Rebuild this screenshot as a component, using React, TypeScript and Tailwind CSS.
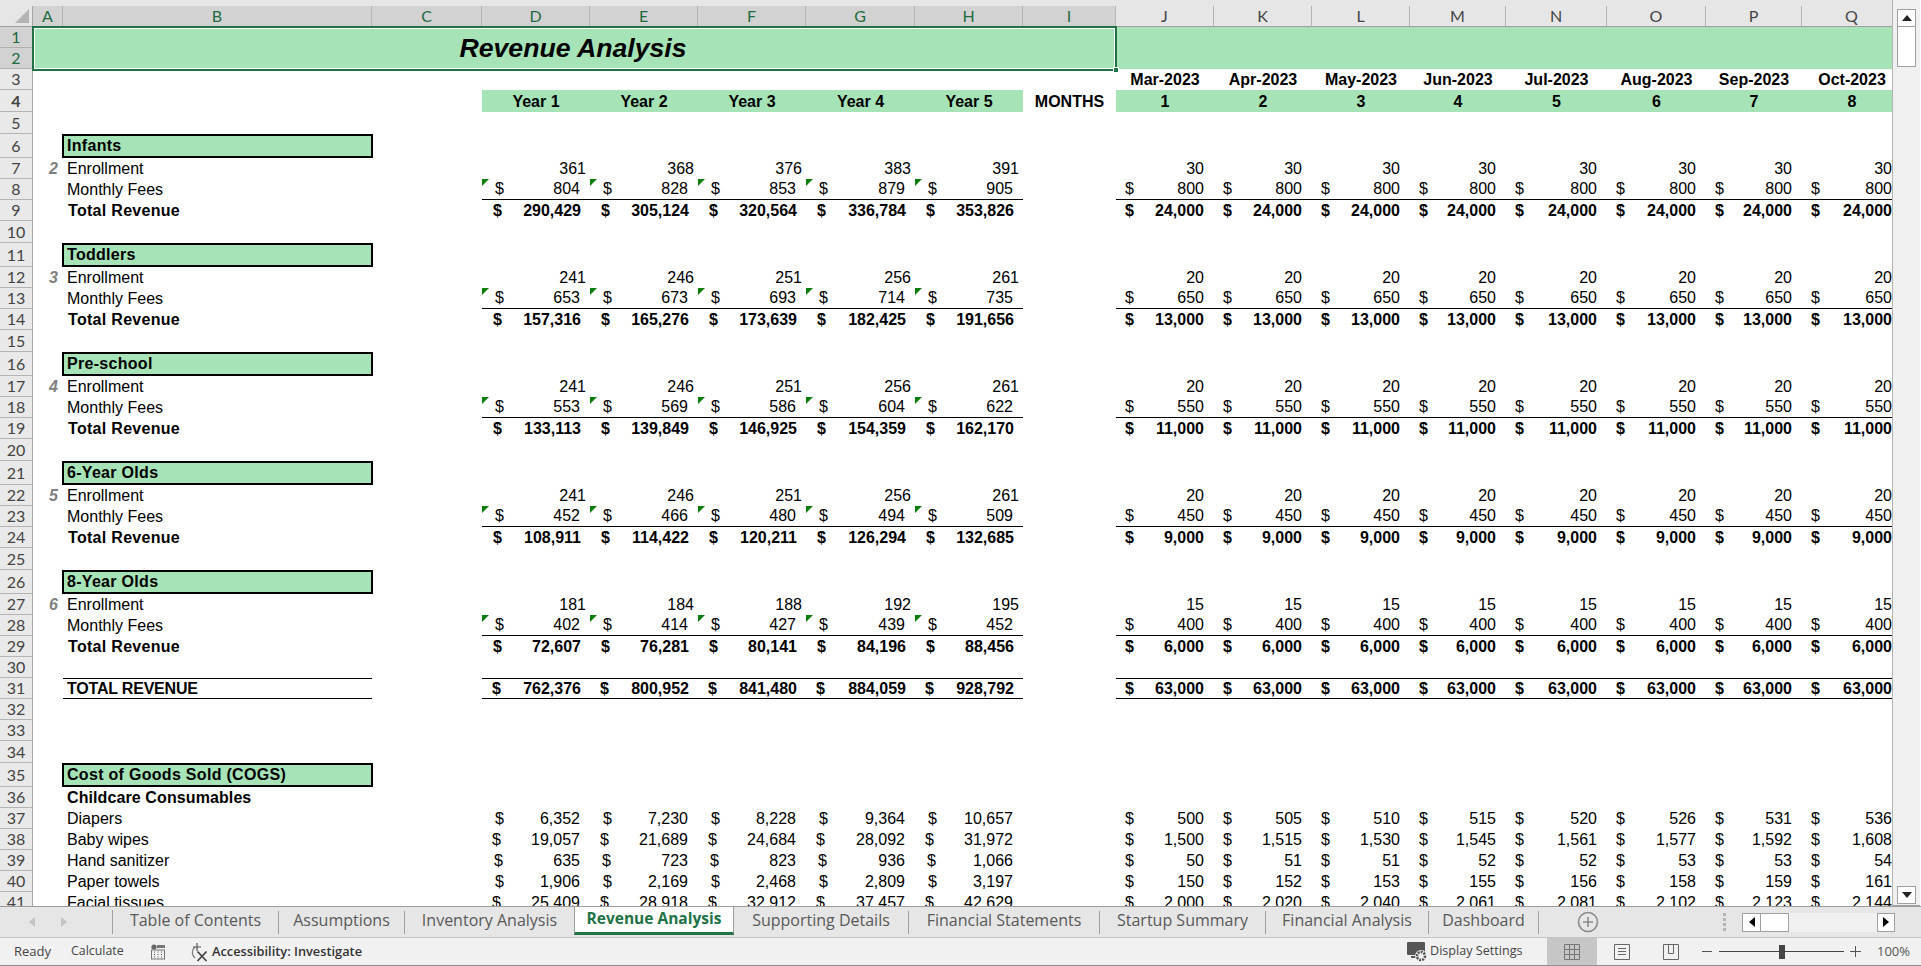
import React from "react";

const GRID =
  "grid w-[1902px] grid-cols-[33px_30px_309px_110px_108px_108px_108px_109px_108px_93px_98px_98px_98px_96px_101px_99px_96px_100px]";

type Border = "none" | "b" | "tb";
const borderClass: Record<Border, string> = {
  none: "",
  b: "border-b border-black",
  tb: "border-y border-black",
};

function RowHead({ n }: { n: number }) {
  return (
    <div className="flex items-center justify-center border-r border-b border-r-[#a6a6a6] border-b-[#b4b4b4] bg-[#e9e9e9] font-['Lato',sans-serif] text-[16px] text-[#444444]">
      {n}
    </div>
  );
}

function Money({
  v,
  pl,
  pr,
  bold,
  border = "none",
  tri,
  dollar = true,
}: {
  v: string;
  pl: string;
  pr: string;
  bold?: boolean;
  border?: Border;
  tri?: boolean;
  dollar?: boolean;
}) {
  return (
    <div
      className={`relative flex items-center ${dollar ? "justify-between" : "justify-end"} ${pl} ${pr} ${borderClass[border]} ${bold ? "font-bold" : ""}`}
    >
      {tri && (
        <span className="absolute top-0 left-0 h-0 w-0 border-t-[7px] border-r-[7px] border-t-[#0b7d0b] border-r-transparent" />
      )}
      {dollar && <span>$</span>}
      <span>{v}</span>
    </div>
  );
}

function Blank({ n, h }: { n: number; h: string }) {
  return (
    <div className={`${GRID} ${h}`}>
      <RowHead n={n} />
    </div>
  );
}

function DataRow({
  n,
  h,
  num,
  label,
  labelClass = "pl-1",
  years,
  months,
  usdY = "pl-[12px]",
  usdM = "pl-[9px]",
  bold,
  border = "none",
  dollar = true,
  prY = "pr-[10px]",
  tri,
  labelBorder,
}: {
  n: number;
  h: string;
  num?: number;
  label: string;
  labelClass?: string;
  years: string[];
  months: string[];
  usdY?: string;
  usdM?: string;
  bold?: boolean;
  border?: Border;
  dollar?: boolean;
  prY?: string;
  tri?: boolean;
  labelBorder?: boolean;
}) {
  return (
    <div className={`${GRID} ${h}`}>
      <RowHead n={n} />
      <div className="flex items-center justify-end pr-[5px] font-bold text-[#808080] italic">{num}</div>
      <div
        className={`flex items-center whitespace-nowrap ${labelClass} ${labelBorder ? "border-y border-black" : ""}`}
      >
        {label}
      </div>
      <div />
      {years.map((v, i) => (
        <Money key={i} v={v} pl={usdY} pr={prY} bold={bold} border={border} dollar={dollar} tri={tri} />
      ))}
      <div />
      {months.map((v, i) => (
        <Money key={i} v={v} pl={usdM} pr="pr-[10px]" bold={bold} border={border} dollar={dollar} />
      ))}
    </div>
  );
}

function Section({ n, h, label }: { n: number; h: string; label: string }) {
  return (
    <div className={`${GRID} ${h}`}>
      <RowHead n={n} />
      <div />
      <div className="-mx-px flex items-center border-2 border-black bg-[#a6e3b7] pl-[3px] font-bold tracking-[0.3px] whitespace-nowrap">
        {label}
      </div>
    </div>
  );
}

function Block({
  start,
  num,
  title,
  enroll,
  fees,
  total,
  mE,
  mF,
  mT,
  gap,
}: {
  start: number;
  num: number;
  title: string;
  enroll: string[];
  fees: string[];
  total: string[];
  mE: string;
  mF: string;
  mT: string;
  gap: boolean;
}) {
  const eight = (s: string) => Array.from({ length: 8 }, () => s);
  return (
    <>
      <Section n={start} h="h-[24px]" label={title} />
      <DataRow
        n={start + 1}
        h="h-[21px]"
        num={num}
        label="Enrollment"
        years={enroll}
        months={eight(mE)}
        dollar={false}
        prY="pr-[4px]"
      />
      <DataRow
        n={start + 2}
        h="h-[21px]"
        label="Monthly Fees"
        years={fees}
        months={eight(mF)}
        usdY="pl-[13px]"
        border="b"
        tri
      />
      <DataRow
        n={start + 3}
        h="h-[21px]"
        label="Total Revenue"
        labelClass="pl-[5px] font-bold tracking-[0.3px]"
        years={total}
        months={eight(mT)}
        usdY="pl-[11px]"
        prY="pr-[9px]"
        bold
      />
      {gap ? <Blank n={start + 4} h="h-[22px]" /> : null}
    </>
  );
}

function ColHead({ l, sel }: { l: string; sel?: boolean }) {
  return (
    <div
      className={`flex items-center justify-center border-r border-b border-r-[#b4b4b4] border-b-[#a0a0a0] font-['Lato',sans-serif] text-[16px] ${sel ? "bg-[#d2d2d2] text-[#1f6b40]" : "bg-[#e6e6e6] text-[#444444]"}`}
    >
      {l}
    </div>
  );
}

function SmallTri({ dir, cls }: { dir: "l" | "r"; cls: string }) {
  return (
    <svg width="8" height="12" viewBox="0 0 8 12" className={cls}>
      <polygon points={dir === "l" ? "7,1 1,6 7,11" : "1,1 7,6 1,11"} fill="currentColor" />
    </svg>
  );
}

const TABS: { t: string; w: string; active?: boolean }[] = [
  { t: "Table of Contents", w: "w-[166px]" },
  { t: "Assumptions", w: "w-[126px]" },
  { t: "Inventory Analysis", w: "w-[170px]" },
  { t: "Revenue Analysis", w: "w-[160px]", active: true },
  { t: "Supporting Details", w: "w-[175px]" },
  { t: "Financial Statements", w: "w-[191px]" },
  { t: "Startup Summary", w: "w-[166px]" },
  { t: "Financial Analysis", w: "w-[163px]" },
  { t: "Dashboard", w: "w-[110px]" },
];

const MONTHS = ["Mar-2023", "Apr-2023", "May-2023", "Jun-2023", "Jul-2023", "Aug-2023", "Sep-2023", "Oct-2023"];

export default function App() {
  const eight = (s: string) => Array.from({ length: 8 }, () => s);
  return (
    <div className="flex h-[966px] w-[1921px] flex-col overflow-hidden bg-white font-['Liberation_Sans',Arial,sans-serif] text-[16px] leading-none text-black">
      <div className="flex min-h-0 flex-1">
        {/* sheet */}
        <div className="w-[1893px] overflow-hidden border-r border-[#b4b4b4]">
          <div className="h-[6px] bg-[#e6e6e6]" />
          <div className={`${GRID} h-[21px]`}>
            <div className="relative border-r border-b border-r-[#a6a6a6] border-b-[#a0a0a0] bg-[#e6e6e6]">
              <span className="absolute right-[3px] bottom-[3px] h-0 w-0 border-b-[14px] border-l-[14px] border-b-[#b4b4b4] border-l-transparent" />
            </div>
            {"ABCDEFGHI".split("").map((l) => (
              <ColHead key={l} l={l} sel />
            ))}
            {"JKLMNOPQ".split("").map((l) => (
              <ColHead key={l} l={l} />
            ))}
          </div>

          {/* title rows */}
          <div className="flex h-[42px] w-[1902px]">
            <div className="flex w-[33px] flex-col font-['Lato',sans-serif] text-[16px] text-[#1f6b40]">
              <div className="flex flex-1 items-center justify-center border-r border-b border-r-[#a6a6a6] border-b-[#b0b0b0] bg-[#d2d2d2]">
                1
              </div>
              <div className="flex flex-1 items-center justify-center border-r border-b border-r-[#a6a6a6] border-b-[#b0b0b0] bg-[#d2d2d2]">
                2
              </div>
            </div>
            <div className="relative flex w-[1083px] items-center justify-center bg-[#a6e3b7] pt-[1px] pr-[3px] text-[26.67px] font-bold italic">
              Revenue Analysis
              <span className="absolute -inset-x-px -top-px -bottom-[2px] border-2 border-[#217346]" />
              <span className="absolute inset-x-[1px] top-[1px] bottom-0 border border-white" />
              <span className="absolute -right-[3px] -bottom-[4px] h-[6px] w-[6px] border border-white bg-[#217346]" />
            </div>
            <div className="flex-1 bg-[#a6e3b7]" />
          </div>

          {/* row 3 */}
          <div className={`${GRID} h-[21px]`}>
            <RowHead n={3} />
            <div className="col-start-11 col-end-19 grid grid-cols-[98px_98px_98px_96px_101px_99px_96px_100px] font-bold">
              {MONTHS.map((m) => (
                <div key={m} className="flex items-center justify-center pt-[1px] whitespace-nowrap">
                  {m}
                </div>
              ))}
            </div>
          </div>

          {/* row 4 */}
          <div className={`${GRID} h-[22px] font-bold`}>
            <RowHead n={4} />
            <div className="col-start-5 col-end-10 grid grid-cols-[108px_108px_108px_109px_108px] bg-[#a6e3b7]">
              {["Year 1", "Year 2", "Year 3", "Year 4", "Year 5"].map((y) => (
                <div key={y} className="flex items-center justify-center pt-[1px]">
                  {y}
                </div>
              ))}
            </div>
            <div className="flex items-center justify-center pt-[1px]">MONTHS</div>
            <div className="col-start-11 col-end-19 grid grid-cols-[98px_98px_98px_96px_101px_99px_96px_100px] bg-[#a6e3b7]">
              {[1, 2, 3, 4, 5, 6, 7, 8].map((m) => (
                <div key={m} className="flex items-center justify-center pt-[1px]">
                  {m}
                </div>
              ))}
            </div>
          </div>
          <Blank n={5} h="h-[22px]" />

          <Block
            start={6}
            num={2}
            title="Infants"
            enroll={["361", "368", "376", "383", "391"]}
            fees={["804", "828", "853", "879", "905"]}
            total={["290,429", "305,124", "320,564", "336,784", "353,826"]}
            mE="30"
            mF="800"
            mT="24,000"
            gap
          />
          <Block
            start={11}
            num={3}
            title="Toddlers"
            enroll={["241", "246", "251", "256", "261"]}
            fees={["653", "673", "693", "714", "735"]}
            total={["157,316", "165,276", "173,639", "182,425", "191,656"]}
            mE="20"
            mF="650"
            mT="13,000"
            gap
          />
          <Block
            start={16}
            num={4}
            title="Pre-school"
            enroll={["241", "246", "251", "256", "261"]}
            fees={["553", "569", "586", "604", "622"]}
            total={["133,113", "139,849", "146,925", "154,359", "162,170"]}
            mE="20"
            mF="550"
            mT="11,000"
            gap
          />
          <Block
            start={21}
            num={5}
            title="6-Year Olds"
            enroll={["241", "246", "251", "256", "261"]}
            fees={["452", "466", "480", "494", "509"]}
            total={["108,911", "114,422", "120,211", "126,294", "132,685"]}
            mE="20"
            mF="450"
            mT="9,000"
            gap
          />
          <Block
            start={26}
            num={6}
            title="8-Year Olds"
            enroll={["181", "184", "188", "192", "195"]}
            fees={["402", "414", "427", "439", "452"]}
            total={["72,607", "76,281", "80,141", "84,196", "88,456"]}
            mE="15"
            mF="400"
            mT="6,000"
            gap={false}
          />
          <Blank n={30} h="h-[21px]" />
          <DataRow
            n={31}
            h="h-[21px]"
            label="TOTAL REVENUE"
            labelBorder
            years={["762,376", "800,952", "841,480", "884,059", "928,792"]}
            months={eight("63,000")}
            usdY="pl-[10px]"
            prY="pr-[9px]"
            bold
            border="tb"
            labelClass="pl-1 font-bold -tracking-[0.2px]"
          />
          <Blank n={32} h="h-[21px]" />
          <Blank n={33} h="h-[21px]" />
          <Blank n={34} h="h-[22px]" />
          <Section n={35} h="h-[24px]" label="Cost of Goods Sold (COGS)" />
          <div className={`${GRID} h-[21px]`}>
            <RowHead n={36} />
            <div />
            <div className="flex items-center pl-1 font-bold tracking-[0.1px] whitespace-nowrap">Childcare Consumables</div>
          </div>
          <DataRow
            n={37}
            h="h-[21px]"
            label="Diapers"
            usdY="pl-[13px]"
            years={["6,352", "7,230", "8,228", "9,364", "10,657"]}
            months={["500", "505", "510", "515", "520", "526", "531", "536"]}
          />
          <DataRow
            n={38}
            h="h-[21px]"
            label="Baby wipes"
            usdY="pl-[10px]"
            years={["19,057", "21,689", "24,684", "28,092", "31,972"]}
            months={["1,500", "1,515", "1,530", "1,545", "1,561", "1,577", "1,592", "1,608"]}
          />
          <DataRow
            n={39}
            h="h-[21px]"
            label="Hand sanitizer"
            usdY="pl-[12px]"
            years={["635", "723", "823", "936", "1,066"]}
            months={["50", "51", "51", "52", "52", "53", "53", "54"]}
          />
          <DataRow
            n={40}
            h="h-[21px]"
            label="Paper towels"
            usdY="pl-[13px]"
            years={["1,906", "2,169", "2,468", "2,809", "3,197"]}
            months={["150", "152", "153", "155", "156", "158", "159", "161"]}
          />
          <DataRow
            n={41}
            h="h-[21px]"
            label="Facial tissues"
            usdY="pl-[10px]"
            years={["25,409", "28,918", "32,912", "37,457", "42,629"]}
            months={["2,000", "2,020", "2,040", "2,061", "2,081", "2,102", "2,123", "2,144"]}
          />
        </div>

        {/* vertical scrollbar */}
        <div className="flex w-[27px] flex-col items-center justify-between border-b border-[#a0a0a0] bg-[#f0f0f0] pt-[9px] pb-[1px]">
          <div className="flex w-[19px] flex-col">
            <div className="flex h-[18px] items-center justify-center border border-[#a0a0a0] bg-white">
              <svg width="10" height="6" viewBox="0 0 10 6">
                <polygon points="5,0 10,6 0,6" fill="#222" />
              </svg>
            </div>
            <div className="h-[40px] border border-t-0 border-[#a0a0a0] bg-white" />
          </div>
          <div className="flex h-[18px] w-[19px] items-center justify-center border border-[#a0a0a0] bg-white">
            <svg width="10" height="6" viewBox="0 0 10 6">
              <polygon points="0,0 10,0 5,6" fill="#222" />
            </svg>
          </div>
        </div>
      </div>

      {/* tab bar */}
      <div className="flex h-[32px] border-t border-b border-t-[#9c9c9c] border-b-[#c6c6c6] bg-[#e6e6e6] font-['Open_Sans',sans-serif] text-[16px] text-[#595959]">
        <div className="flex w-[112px] items-center justify-start gap-[24px] pl-[28px]">
          <SmallTri dir="l" cls="text-[#c4c4c4]" />
          <SmallTri dir="r" cls="text-[#c4c4c4]" />
        </div>
        <div className="my-[3px] w-px bg-[#a0a0a0]" />
        {TABS.map((tab) =>
          tab.active ? (
            <div
              key={tab.t}
              className={`${tab.w} -ml-px flex h-[28px] items-center justify-center border-x border-b-[3px] border-x-[#a0a0a0] border-b-[#217346] bg-white pb-[2px] text-[15.5px] font-bold whitespace-nowrap text-[#217346]`}
            >
              {tab.t}
            </div>
          ) : (
            <div key={tab.t} className={`${tab.w} flex items-center whitespace-nowrap`}>
              <span className="flex-1 pb-[4px] text-center">{tab.t}</span>
              <span className="h-[23px] w-px bg-[#a0a0a0]" />
            </div>
          ),
        )}
        <div className="ml-[38px] flex items-center">
          <svg width="22" height="22" viewBox="0 0 22 22">
            <circle cx="11" cy="11" r="9.5" fill="none" stroke="#8a8a8a" strokeWidth="1.6" />
            <path d="M11 6v10M6 11h10" stroke="#8a8a8a" strokeWidth="1.6" />
          </svg>
        </div>
        <div className="ml-auto flex items-center">
          <div className="mr-[16px] flex flex-col gap-[2px]">
            <span className="h-[3px] w-[3px] bg-[#b4b4b4]" />
            <span className="h-[3px] w-[3px] bg-[#b4b4b4]" />
            <span className="h-[3px] w-[3px] bg-[#b4b4b4]" />
            <span className="h-[3px] w-[3px] bg-[#b4b4b4]" />
          </div>
          <div className="mr-[26px] flex h-[19px] w-[153px] bg-[#f0f0f0]">
            <div className="flex w-[19px] items-center justify-center border border-[#a0a0a0] bg-white text-black">
              <SmallTri dir="l" cls="" />
            </div>
            <div className="w-[28px] border border-l-0 border-[#a0a0a0] bg-white" />
            <div className="flex-1" />
            <div className="flex w-[18px] items-center justify-center border border-[#a0a0a0] bg-white text-black">
              <SmallTri dir="r" cls="" />
            </div>
          </div>
        </div>
      </div>

      {/* status bar */}
      <div className="flex h-[28px] items-center border-b border-[#8f8f8f] bg-[#f1f1f1] font-['Open_Sans',sans-serif] text-[13px] text-[#444444]">
        <span className="ml-[14px] w-[57px]">Ready</span>
        <span className="w-[78px] text-[12.4px]">Calculate</span>
        <svg width="16" height="16" viewBox="0 0 16 16" className="ml-[1px]">
          <circle cx="4" cy="3" r="2.6" fill="#666" />
          <rect x="7" y="1" width="8" height="3" fill="#777" />
          <rect x="1.5" y="6" width="13" height="9" fill="none" stroke="#777" />
          <path d="M4 8h1M7.5 8h1M11 8h1M4 10.5h1M7.5 10.5h1M11 10.5h1M4 13h1M7.5 13h1M11 13h1" stroke="#555" />
        </svg>
        <svg width="20" height="20" viewBox="0 0 20 20" className="ml-[23px]">
          <path d="M6 5a7 7 0 0 0 0 11" fill="none" stroke="#777" strokeWidth="1.2" />
          <path d="M8 1v8M4 5h8" fill="none" stroke="#555" strokeWidth="1.2" />
          <path d="M8.5 9.5l9 9.5M17.5 9.5l-9 9.5" stroke="#444" strokeWidth="1.8" />
        </svg>
        <span className="ml-[3px] text-[12.8px] font-semibold whitespace-nowrap text-[#333333]">Accessibility: Investigate</span>
        <div className="ml-auto flex h-full items-center">
          <svg width="22" height="22" viewBox="0 0 22 22">
            <rect x="0" y="1" width="18" height="13" rx="1" fill="#555" />
            <rect x="4" y="15" width="6" height="2" fill="#555" />
            <circle cx="14" cy="15" r="6" fill="#f1f1f1" />
            <circle cx="14" cy="15" r="4" fill="none" stroke="#555" strokeWidth="2.6" strokeDasharray="2 1" />
          </svg>
          <span className="ml-[1px] w-[117px] text-[12.6px] whitespace-nowrap">Display Settings</span>
          <div className="flex h-full w-[50px] items-center justify-center bg-[#c6c6c6]">
            <svg width="16" height="16" viewBox="0 0 16 16" fill="none" stroke="#777">
              <path d="M.5.5h15v15H.5zM5.5.5v15M10.5.5v15M.5 5.5h15M.5 10.5h15" />
            </svg>
          </div>
          <div className="flex h-full w-[49px] items-center justify-center">
            <svg width="16" height="16" viewBox="0 0 16 16" fill="none" stroke="#666">
              <path d="M.5.5h15v15H.5zM4 4.5h8M4 7.5h8M4 10.5h8" />
            </svg>
          </div>
          <div className="flex h-full w-[49px] items-center justify-center">
            <svg width="16" height="16" viewBox="0 0 16 16" fill="none" stroke="#666">
              <path d="M.5.5h15v15H.5zM5.5.5v9h5V.5" />
            </svg>
          </div>
          <span className="ml-[7px] h-px w-[10px] bg-[#555]" />
          <div className="relative ml-[7px] flex h-[14px] w-[125px] items-center">
            <span className="h-px w-full bg-[#444]" />
            <span className="absolute top-0 left-[60px] h-[14px] w-[6px] bg-[#444]" />
          </div>
          <svg width="13" height="13" viewBox="0 0 13 13" className="ml-[5px]">
            <path d="M6.5 1v11M1 6.5h11" stroke="#555" />
          </svg>
          <span className="ml-[15px] w-[44px] text-[#555]">100%</span>
        </div>
      </div>
    </div>
  );
}
